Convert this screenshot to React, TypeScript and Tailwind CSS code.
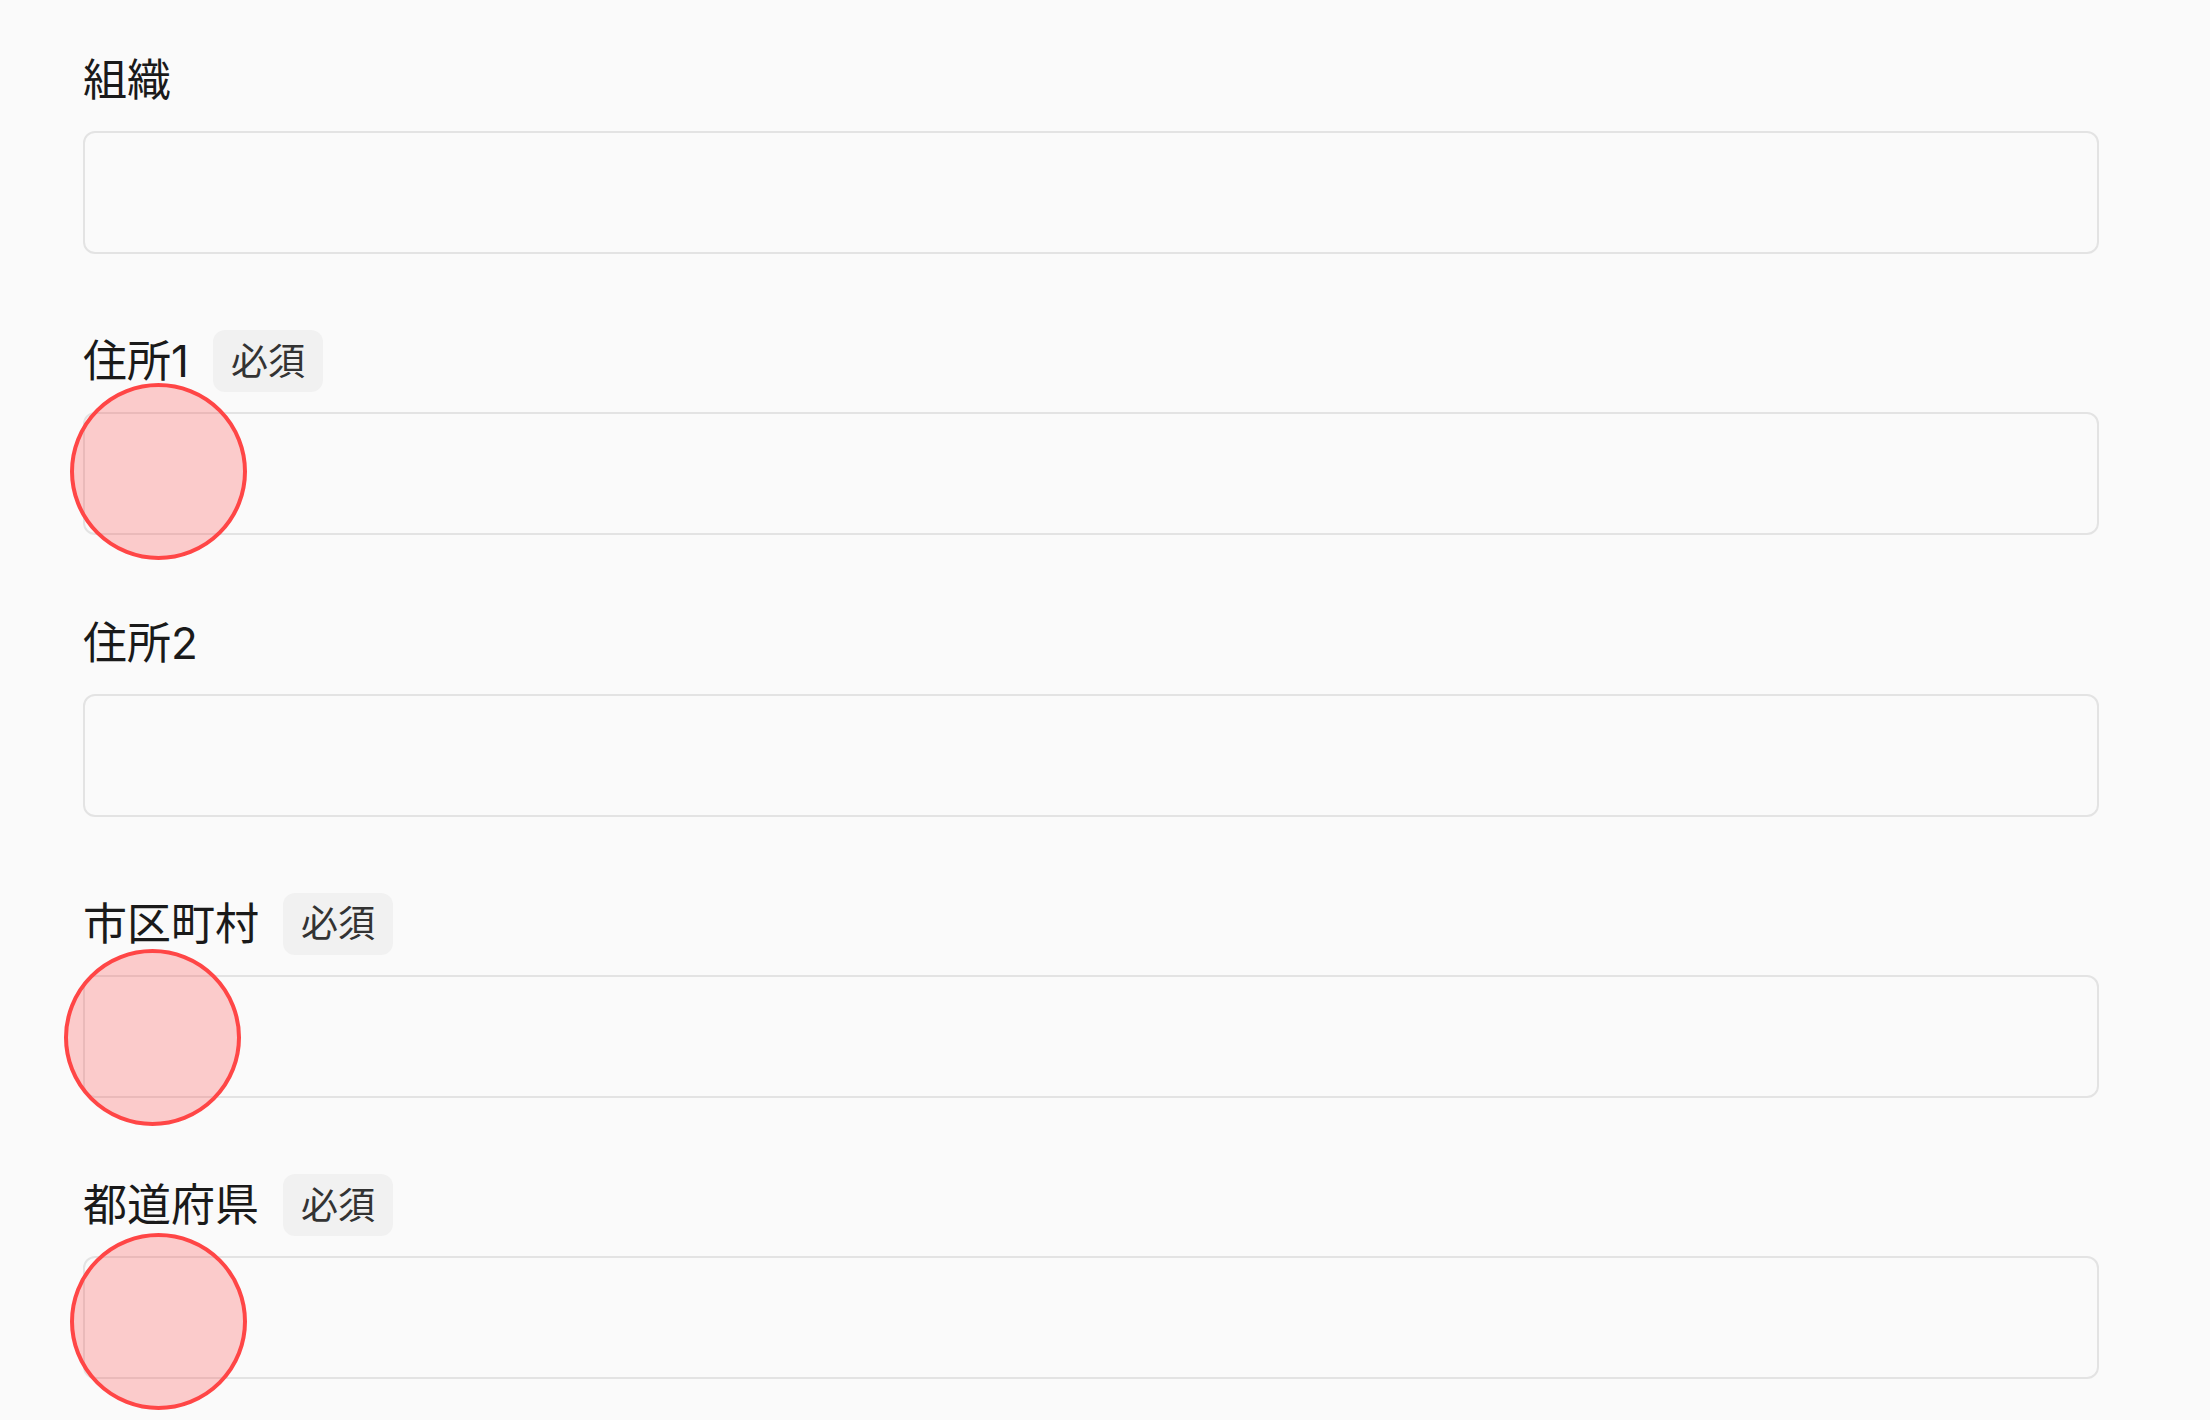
import React from "react";

type Field = {
  label: string;
  required?: boolean;
};

const fields: Field[] = [
  { label: "組織" },
  { label: "住所1", required: true },
  { label: "住所2" },
  { label: "市区町村", required: true },
  { label: "都道府県", required: true },
];

// click markers laid over the form
const markers = [
  { left: 70, top: 383 },
  { left: 64, top: 949 },
  { left: 70, top: 1233 },
];

function FormField({ label, required }: Field) {
  return (
    <div className="flex flex-col">
      <div className="flex h-[62px] items-center gap-[24px] mb-[20px]">
        <span className="text-[44px] leading-none text-[#1a1a1a]">{label}</span>
        {required && (
          <span className="flex h-[62px] items-center rounded-[12px] bg-[#f1f1f1] px-[18px] text-[37px] leading-none text-[#333333]">
            必須
          </span>
        )}
      </div>
      <input
        type="text"
        className="h-[123px] w-full rounded-[12px] border-2 border-[#e3e3e3] bg-[#fafafa] px-[30px] text-[44px] outline-none"
      />
    </div>
  );
}

export default function App() {
  return (
    <div
      className="relative h-[1420px] w-full overflow-hidden bg-[#fafafa]"
      style={{ fontFamily: 'Inter, "Noto Sans CJK JP", sans-serif' }}
    >
      <div className="flex w-[2016px] flex-col gap-[76.25px] pl-[83px] pt-[49px] box-content">
        {fields.map((f) => (
          <FormField key={f.label} {...f} />
        ))}
      </div>

      {markers.map((m, i) => (
        <div
          key={i}
          className="pointer-events-none absolute h-[177px] w-[177px] rounded-full border-[4px] border-[#ff4646] bg-[rgba(255,68,68,0.26)]"
          style={{ left: m.left, top: m.top }}
        />
      ))}
    </div>
  );
}
